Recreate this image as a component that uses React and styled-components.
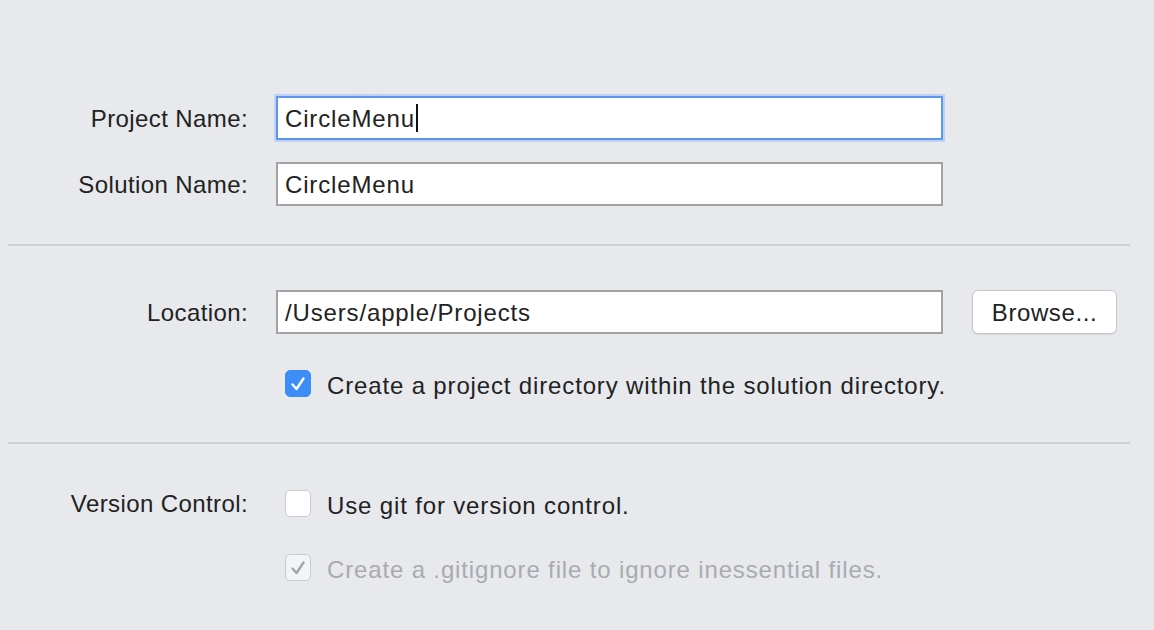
import React from 'react';
import styled, { createGlobalStyle } from 'styled-components';

const GlobalStyle = createGlobalStyle`
  html, body {
    margin: 0;
    padding: 0;
    background: #e7e9ed;
  }
  body {
    font-family: 'Liberation Sans', Arial, sans-serif;
    color: #222222;
  }
`;

const Page = styled.div`
  width: 1154px;
  height: 630px;
  box-sizing: border-box;
  padding-top: 96px;
  overflow: hidden;
  font-size: 24px;
  letter-spacing: 0.85px;
`;

const Section = styled.div`
  display: flex;
  flex-direction: column;
  gap: ${(p) => p.gap || 22}px;
`;

const Row = styled.div`
  display: flex;
  align-items: center;
`;

const Label = styled.label`
  width: 248px;
  text-align: right;
  flex-shrink: 0;
  margin-right: 28px;
  padding-top: 2px;
  letter-spacing: 0.4px;
`;

const Spacer = styled.div`
  width: 276px;
  flex-shrink: 0;
`;

const Field = styled.div`
  width: 667px;
  height: 44px;
  box-sizing: border-box;
  display: flex;
  align-items: center;
  border: 2px solid ${(p) => (p.focused ? '#5e95ee' : '#a2a2a2')};
  box-shadow: ${(p) => (p.focused ? '0 0 0 2px #bfd2f3' : 'none')};
  background: #ffffff;
  padding: 2px 7px 0;
  color: #222222;
  white-space: nowrap;
`;

const Caret = styled.span`
  display: inline-block;
  width: 2px;
  height: 28px;
  margin-left: 1px;
  margin-top: -2px;
  background: #111111;
`;

const Button = styled.button`
  margin-left: 29px;
  width: 145px;
  height: 44px;
  border: 1px solid #c6c6c6;
  border-radius: 6px;
  background: #ffffff;
  box-shadow: 0 1px 1px rgba(0, 0, 0, 0.08);
  font-family: 'Liberation Sans', Arial, sans-serif;
  font-size: 24px;
  letter-spacing: 0.6px;
  color: #222222;
  padding: 2px 0 0;
`;

const Divider = styled.div`
  margin: ${(p) => p.margin};
  margin-left: 8px;
  width: 1122px;
  height: 2px;
  background: #cdd0d5;
`;

const CheckRow = styled.div`
  display: flex;
  align-items: center;
  height: 27px;
  margin-left: 9px;
  gap: 16px;
  color: ${(p) => (p.disabled ? '#a9abaf' : '#222222')};
`;

const CheckText = styled.span`
  display: block;
  height: 27px;
  line-height: 31px;
  white-space: nowrap;
`;

const Box = styled.span`
  width: 26px;
  height: 27px;
  box-sizing: border-box;
  border-radius: 5px;
  display: inline-flex;
  align-items: center;
  justify-content: center;
  flex-shrink: 0;
  background: ${(p) => (p.variant === 'on' ? '#3c8ef6' : p.variant === 'dim' ? '#f3f4f6' : '#ffffff')};
  border: 1px solid ${(p) => (p.variant === 'on' ? '#3c8ef6' : '#c8cacd')};
`;

const Check = ({ color }) => (
  <svg width="18" height="18" viewBox="0 0 18 18">
    <path d="M3.5 9.5 L7.5 14 L14.5 3.5" fill="none" stroke={color} strokeWidth="2.4" strokeLinecap="round" strokeLinejoin="round" />
  </svg>
);

const Checkbox = ({ variant }) => (
  <Box variant={variant}>
    {variant === 'on' && <Check color="#ffffff" />}
    {variant === 'dim' && <Check color="#a3a5a8" />}
  </Box>
);

export default function App() {
  return (
    <Page>
      <GlobalStyle />
      <Section>
        <Row>
          <Label>Project Name:</Label>
          <Field focused>
            CircleMenu
            <Caret />
          </Field>
        </Row>
        <Row>
          <Label>Solution Name:</Label>
          <Field>CircleMenu</Field>
        </Row>
      </Section>
      <Divider margin="38px 0 44px" />
      <Section gap={36}>
        <Row>
          <Label>Location:</Label>
          <Field>/Users/apple/Projects</Field>
          <Button>Browse...</Button>
        </Row>
        <Row>
          <Spacer />
          <CheckRow>
            <Checkbox variant="on" />
            <CheckText>Create a project directory within the solution directory.</CheckText>
          </CheckRow>
        </Row>
      </Section>
      <Divider margin="45px 0 44px" />
      <Section gap={36}>
        <Row>
          <Label>Version Control:</Label>
          <CheckRow>
            <Checkbox variant="off" />
            <CheckText>Use git for version control.</CheckText>
          </CheckRow>
        </Row>
        <Row>
          <Spacer />
          <CheckRow disabled>
            <Checkbox variant="dim" />
            <CheckText>Create a .gitignore file to ignore inessential files.</CheckText>
          </CheckRow>
        </Row>
      </Section>
    </Page>
  );
}
